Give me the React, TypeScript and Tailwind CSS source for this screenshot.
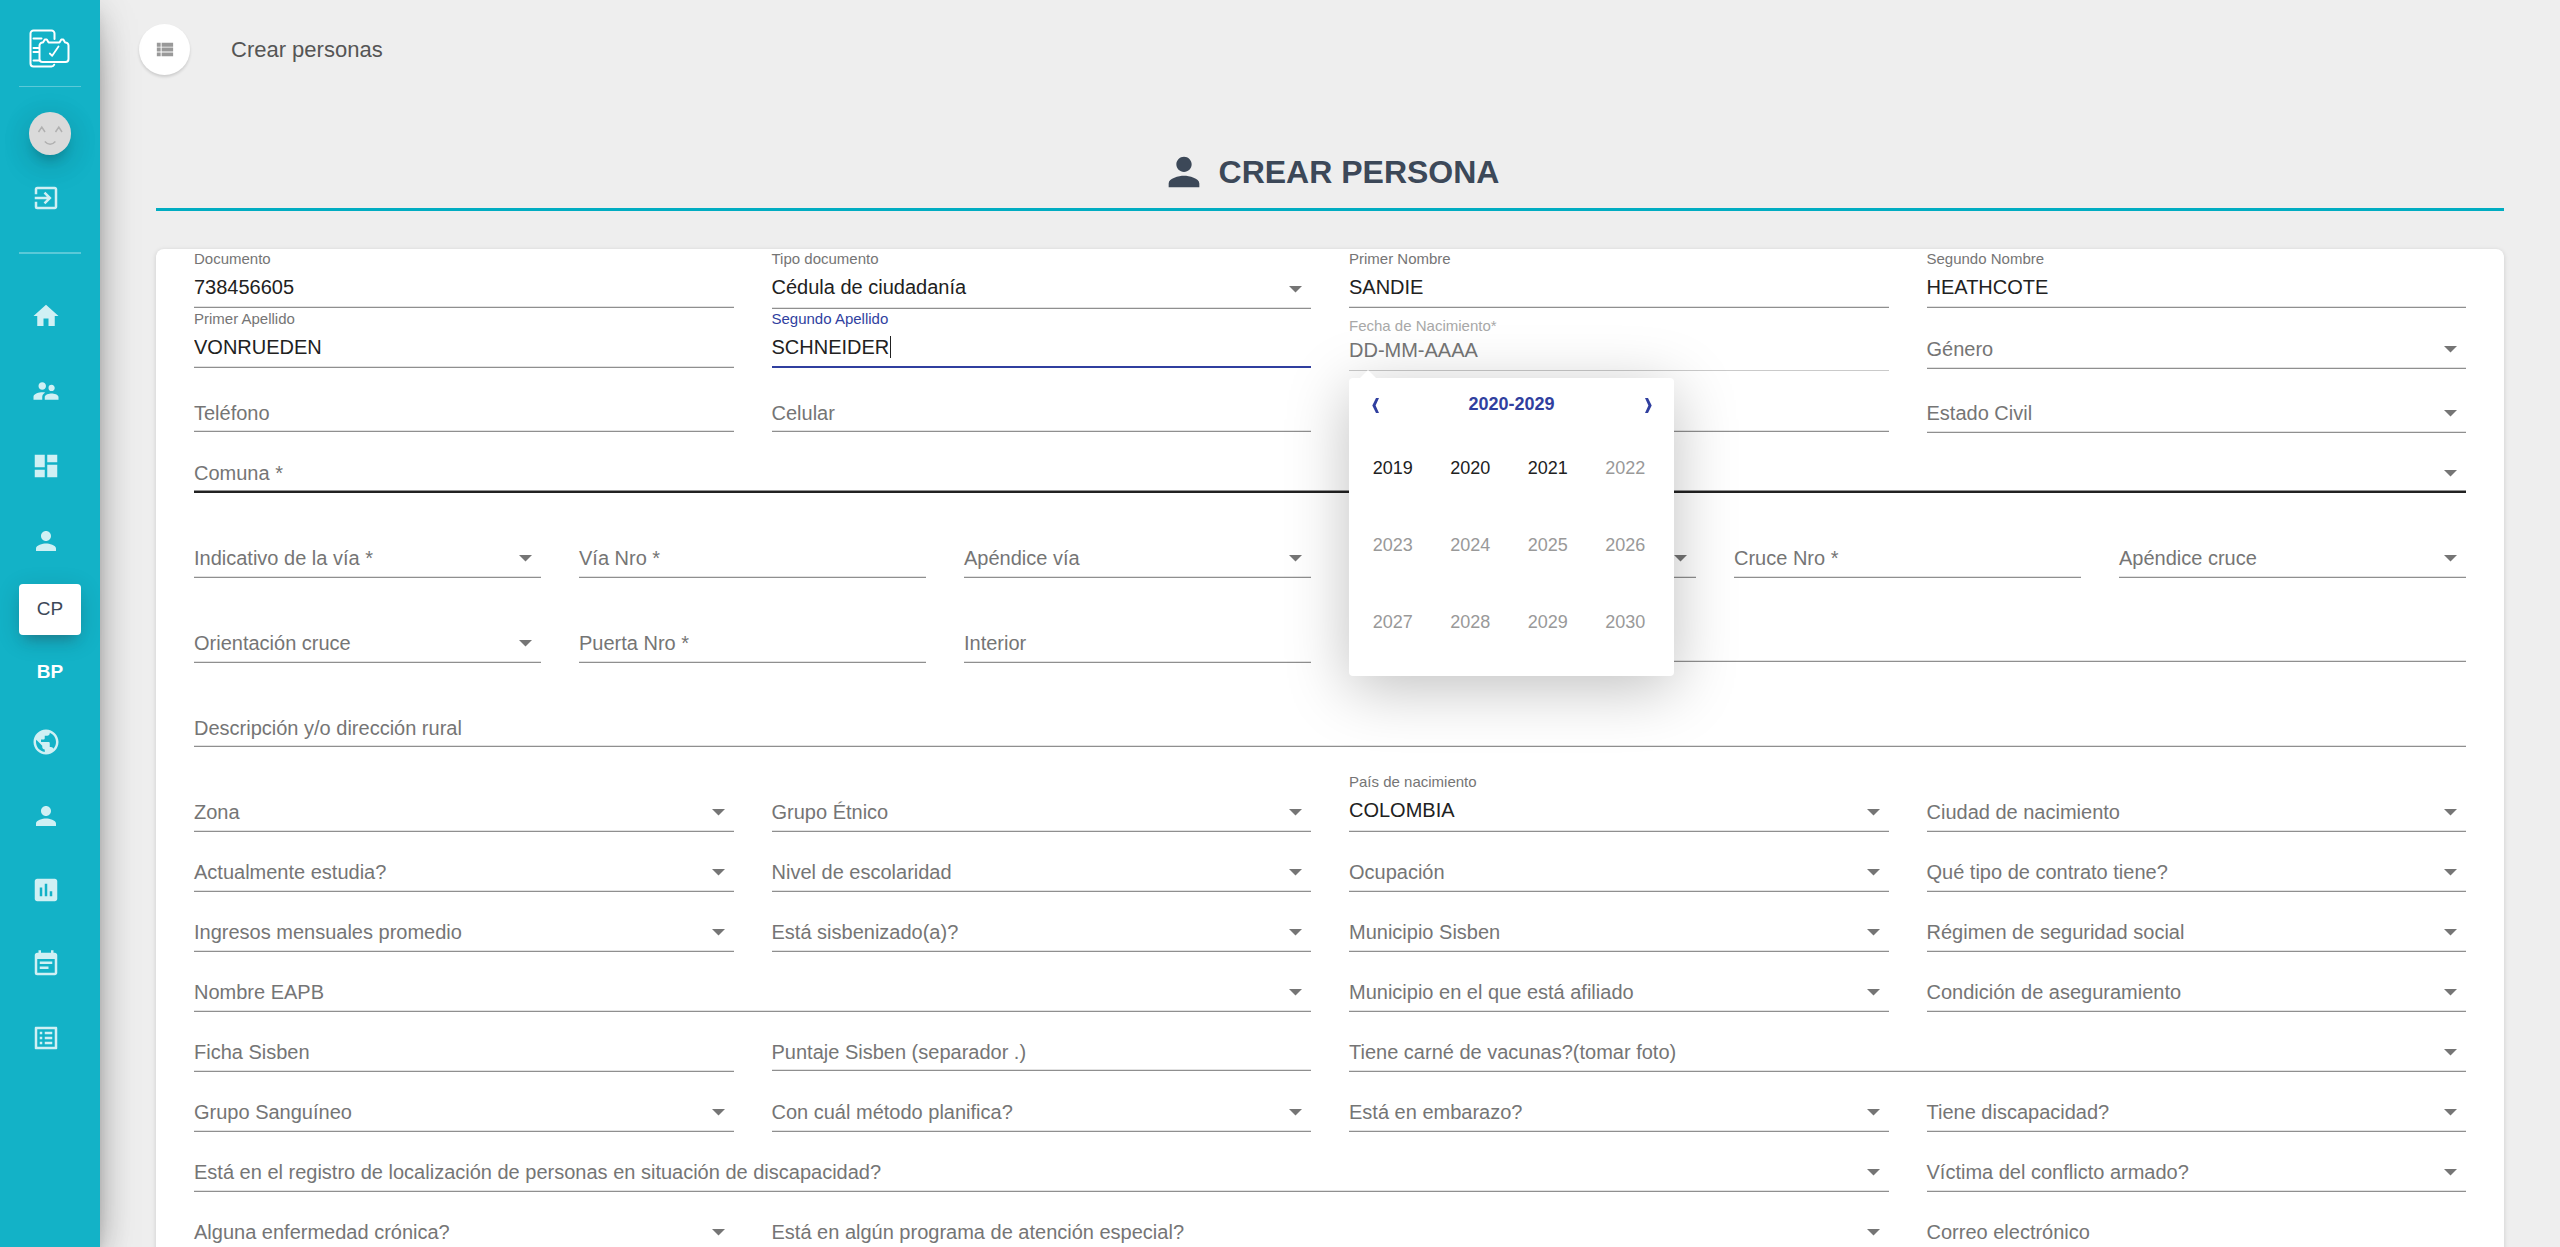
import React, { useId } from 'react';
import {
  MdDashboard,
  MdEventNote,
  MdExitToApp,
  MdHome,
  MdInsertChart,
  MdListAlt,
  MdPerson,
  MdPublic,
  MdSupervisorAccount,
} from 'react-icons/md';

type Tone = 'normal' | 'focused' | 'strong' | 'disabled';

type FieldProps = {
  label?: string;
  name?: string;
  value?: string;
  kind?: 'input' | 'select';
  tone?: Tone;
  tall?: boolean;
  span?: 2 | 3 | 6 | 9 | 12;
};

const spans = {
  2: 'col-span-2',
  3: 'col-span-3',
  6: 'col-span-6',
  9: 'col-span-9',
  12: 'col-span-12',
};

const lines: Record<Tone, string> = {
  normal: 'border-b border-[#8f8f8f] shadow-[inset_0_-1px_0_#e2e2e2]',
  focused: 'border-b-2 border-[#303f9f]',
  strong: 'border-b-2 border-[#212121] shadow-[inset_0_-1px_0_#949494]',
  disabled: 'border-b border-[#cacaca]',
};

function Field({ label, name, value, kind = 'input', tone = 'normal', tall = false, span = 3 }: FieldProps) {
  const id = useId();
  const isSelect = kind === 'select';
  const height = isSelect || tall ? 'h-[60px]' : 'h-[59px]';
  const control = 'h-9 w-full appearance-none bg-transparent text-xl text-[#212121] outline-none';

  return (
    <div className={`relative flex flex-col pt-5 ${height} ${spans[span]} ${lines[tone]}`}>
      {label && (
        <label
          htmlFor={id}
          className={
            value
              ? `absolute top-0 left-0 text-[15px] leading-5 ${tone === 'focused' ? 'text-[#303f9f]' : 'text-[#757575]'}`
              : 'pointer-events-none absolute top-[26px] left-0 text-xl leading-7 whitespace-nowrap text-[#757575]'
          }
        >
          {label}
        </label>
      )}
      {isSelect ? (
        <select id={id} aria-label={label ? undefined : name} defaultValue={value ?? ''} className={control}>
          <option value={value ?? ''}>{value ?? ''}</option>
        </select>
      ) : (
        <input id={id} type="text" aria-label={label ? undefined : name} defaultValue={value ?? ''} className={control} />
      )}
      {tone === 'focused' && <span className="absolute top-[27px] left-[118px] h-[22px] w-px bg-[#212121]" />}
      {isSelect && (
        <svg viewBox="0 0 13 7" className="pointer-events-none absolute top-[37px] right-[9px] h-[7px] w-[13px]" aria-hidden="true">
          <path d="M0 0h13L6.500 6.500z" fill="#757575" />
        </svg>
      )}
    </div>
  );
}

function Row({ children }: { children: React.ReactNode }) {
  return <div className="grid grid-cols-12 items-start gap-x-[38px]">{children}</div>;
}

const years = [2019, 2020, 2021, 2022, 2023, 2024, 2025, 2026, 2027, 2028, 2029, 2030];

function YearPicker() {
  return (
    <div className="absolute top-[69px] left-0 z-10 w-[325px] rounded bg-white pb-4 shadow-[0_12px_62px_rgba(0,0,0,0.25)]">
      <svg viewBox="0 0 16 8" className="absolute -top-2 left-[11px] h-2 w-4" aria-hidden="true">
        <path d="M0 8 8 0l8 8z" fill="#fff" />
      </svg>
      <div className="flex h-[51px] items-center justify-between px-[18px] text-lg font-bold text-[#303f9f]">
        <button type="button" aria-label="Década anterior" className="flex w-4 justify-center pt-1">
          <svg viewBox="0 0 7 15" className="h-[15px] w-[7px]" aria-hidden="true">
            <path d="M4 0H7L3.6 7.500 7 15H4L0.3 7.500z" fill="currentColor" />
          </svg>
        </button>
        <button type="button" className="leading-6">2020-2029</button>
        <button type="button" aria-label="Década siguiente" className="flex w-4 justify-center pt-1">
          <svg viewBox="0 0 7 15" className="h-[15px] w-[7px]" aria-hidden="true">
            <path d="M3 0H0l3.400 7.500L0 15h3l3.700-7.500z" fill="currentColor" />
          </svg>
        </button>
      </div>
      <div className="grid grid-cols-4 pr-[10px] pl-[5px]">
        {years.map((year) => (
          <button
            key={year}
            type="button"
            disabled={year > 2021}
            className="h-[77px] text-lg text-[#212121] disabled:text-[#999999]"
          >
            {year}
          </button>
        ))}
      </div>
    </div>
  );
}

function DateField() {
  const id = useId();
  return (
    <div className={`relative col-span-3 mb-[2px] flex h-[62px] flex-col pt-[7px] ${lines.disabled}`}>
      <label htmlFor={id} className="text-[15px] leading-5 text-[#a8a8a8]">
        Fecha de Nacimiento*
      </label>
      <input
        id={id}
        type="text"
        placeholder="DD-MM-AAAA"
        className="h-7 w-full bg-transparent text-xl outline-none placeholder:text-[#757575]"
      />
      <YearPicker />
    </div>
  );
}

function Logo() {
  return (
    <svg
      viewBox="0 0 44 42"
      className="h-[42px] w-11"
      fill="none"
      stroke="#fff"
      strokeWidth="2"
      strokeLinecap="round"
      strokeLinejoin="round"
      aria-hidden="true"
    >
      <path d="M26.500 11V5.500a3 3 0 0 0-3-3H5.500a3 3 0 0 0-3 3v30a3 3 0 0 0 3 3h18a3 3 0 0 0 2.700-1.800" />
      <path d="M5.500 10.500h8M5.500 20h5M5.500 24h5M5.500 32.500h5.500" />
      <path d="M15 14.500l1.800-3h2l1.800 3H31.500l1.800-3h2l1.800 3a3 3 0 0 1 3.400 3V31a3 3 0 0 1-3 3h-23a3 3 0 0 1-3-3V17.500a3 3 0 0 1 3.500-3z" />
      <path d="M21.800 25.500l2.400 2.300L30.500 18.500" strokeWidth="1.800" />
    </svg>
  );
}

function Face() {
  return (
    <svg viewBox="0 0 42 43" className="h-[43px] w-[42px]" fill="none" stroke="#b0b0b0" strokeWidth="1.500" aria-hidden="true">
      <path d="M9.500 20l3.300-4.800 3.200 4.800M26.500 20l3.300-4.800 3.200 4.800" />
      <path d="M15.800 29.500q5.300 5.500 10.600 0" />
    </svg>
  );
}

const topLinks = [
  { label: 'Inicio', Icon: MdHome },
  { label: 'Usuarios', Icon: MdSupervisorAccount },
  { label: 'Tablero', Icon: MdDashboard },
  { label: 'Personas', Icon: MdPerson },
];

const bottomLinks = [
  { label: 'Mapa', Icon: MdPublic },
  { label: 'Perfil', Icon: MdPerson },
  { label: 'Reportes', Icon: MdInsertChart },
  { label: 'Agenda', Icon: MdEventNote },
  { label: 'Listado', Icon: MdListAlt },
];

function NavIcons({ links }: { links: typeof topLinks }) {
  return (
    <>
      {links.map(({ label, Icon }) => (
        <a key={label} href="#" aria-label={label} className="flex h-[30px] items-center pl-[31px] text-white/80">
          <Icon className="size-[30px]" />
        </a>
      ))}
    </>
  );
}

function Sidebar() {
  return (
    <aside className="z-20 flex w-[100px] shrink-0 flex-col bg-[#13b2c7] shadow-[0_20px_48px_-15px_rgba(0,0,0,0.56),0_5px_31px_rgba(0,0,0,0.12),0_10px_12px_-6px_rgba(0,0,0,0.2)]">
      <a href="#" aria-label="Logo" className="mx-[19px] flex h-[87px] items-center justify-center border-b border-white/30 pt-3">
        <Logo />
      </a>
      <div className="mx-[19px] flex flex-col border-b-2 border-white/30 pt-[25px] pb-[39px]">
        <a
          href="#"
          aria-label="Usuario"
          className="self-center rounded-full bg-[#dadada] shadow-[0_12px_38px_-12px_rgba(0,0,0,0.42),0_5px_31px_rgba(0,0,0,0.12),0_10px_12px_-6px_rgba(0,0,0,0.2)]"
        >
          <Face />
        </a>
        <a href="#" aria-label="Salir" className="mt-[28px] ml-3 text-white/80">
          <MdExitToApp className="size-[30px]" />
        </a>
      </div>
      <nav className="flex flex-col pt-[47px]">
        <div className="flex flex-col gap-[45px]">
          <NavIcons links={topLinks} />
        </div>
        <a
          href="#"
          className="mx-[19px] mt-[28px] flex h-[51px] items-center justify-center rounded bg-white text-[19px] text-[#3c4858] shadow-[0_5px_25px_rgba(0,0,0,0.14),0_9px_12px_-6px_rgba(60,72,88,0.4)]"
        >
          CP
        </a>
        <a href="#" className="mx-[19px] mt-3 flex h-[51px] items-center justify-center text-[19px] font-bold text-white">
          BP
        </a>
        <div className="flex flex-col gap-11 pt-[29px]">
          <NavIcons links={bottomLinks} />
        </div>
      </nav>
    </aside>
  );
}

export default function App() {
  return (
    <div className="flex h-screen overflow-hidden bg-[#eeeeee] font-['Liberation_Sans',Arial,sans-serif] text-[#3c4858]">
      <Sidebar />
      <main className="min-w-0 flex-1 overflow-y-auto [scrollbar-width:none]">
        <header className="flex h-[99px] items-center gap-[41px] pl-[39px]">
          <button
            type="button"
            aria-label="Alternar menú"
            className="flex size-[51px] items-center justify-center rounded-full bg-white shadow-[0_2px_3px_rgba(0,0,0,0.14)]"
          >
            <svg viewBox="0 0 24 24" className="size-[23px]" fill="#999" aria-hidden="true">
              <path d="M4 14h4v-4H4v4zm0 5h4v-4H4v4zM4 9h4V5H4v4zm5 5h12v-4H9v4zm0 5h12v-4H9v4zM9 5v4h12V5H9z" />
            </svg>
          </button>
          <a href="#" className="text-[22px] text-[#555555]">
            Crear personas
          </a>
        </header>

        <div className="px-14 pt-[50px]">
          <h1 className="flex h-[62px] items-start justify-center gap-3 border-b-3 border-[#00acc1] text-[32px] leading-[46px] font-bold">
            <MdPerson className="size-[46px]" />
            CREAR PERSONA
          </h1>

          <form className="mt-[38px] rounded-lg bg-white px-[38px] pb-10 shadow-[0_1px_5px_rgba(0,0,0,0.14)]">
            <Row>
              <Field label="Documento" value="738456605" />
              <Field label="Tipo documento" value="Cédula de ciudadanía" kind="select" />
              <Field label="Primer Nombre" value="SANDIE" />
              <Field label="Segundo Nombre" value="HEATHCOTE" />
            </Row>
            <Row>
              <Field label="Primer Apellido" value="VONRUEDEN" />
              <Field label="Segundo Apellido" value="SCHNEIDER" tone="focused" />
              <DateField />
              <Field label="Género" kind="select" />
            </Row>
            <Row>
              <Field label="Teléfono" />
              <Field label="Celular" />
              <Field name="Teléfono alterno" />
              <Field label="Estado Civil" kind="select" />
            </Row>
            <div className="flex flex-col gap-[25px] pb-[25px]">
              <Row>
                <Field label="Comuna *" kind="select" tone="strong" span={12} />
              </Row>
              <Row>
                <Field label="Indicativo de la vía *" kind="select" span={2} />
                <Field label="Vía Nro *" tall span={2} />
                <Field label="Apéndice vía" kind="select" span={2} />
                <Field name="Orientación vía" kind="select" span={2} />
                <Field label="Cruce Nro *" tall span={2} />
                <Field label="Apéndice cruce" kind="select" span={2} />
              </Row>
              <Row>
                <Field label="Orientación cruce" kind="select" span={2} />
                <Field label="Puerta Nro *" tall span={2} />
                <Field label="Interior" tall span={2} />
                <Field name="Dirección" span={6} />
              </Row>
              <Row>
                <Field label="Descripción y/o dirección rural" span={12} />
              </Row>
            </div>
            <Row>
              <Field label="Zona" kind="select" />
              <Field label="Grupo Étnico" kind="select" />
              <Field label="País de nacimiento" value="COLOMBIA" kind="select" />
              <Field label="Ciudad de nacimiento" kind="select" />
            </Row>
            <Row>
              <Field label="Actualmente estudia?" kind="select" />
              <Field label="Nivel de escolaridad" kind="select" />
              <Field label="Ocupación" kind="select" />
              <Field label="Qué tipo de contrato tiene?" kind="select" />
            </Row>
            <Row>
              <Field label="Ingresos mensuales promedio" kind="select" />
              <Field label="Está sisbenizado(a)?" kind="select" />
              <Field label="Municipio Sisben" kind="select" />
              <Field label="Régimen de seguridad social" kind="select" />
            </Row>
            <Row>
              <Field label="Nombre EAPB" kind="select" span={6} />
              <Field label="Municipio en el que está afiliado" kind="select" />
              <Field label="Condición de aseguramiento" kind="select" />
            </Row>
            <Row>
              <Field label="Ficha Sisben" tall />
              <Field label="Puntaje Sisben (separador .)" />
              <Field label="Tiene carné de vacunas?(tomar foto)" kind="select" span={6} />
            </Row>
            <Row>
              <Field label="Grupo Sanguíneo" kind="select" />
              <Field label="Con cuál método planifica?" kind="select" />
              <Field label="Está en embarazo?" kind="select" />
              <Field label="Tiene discapacidad?" kind="select" />
            </Row>
            <Row>
              <Field
                label="Está en el registro de localización de personas en situación de discapacidad?"
                kind="select"
                span={9}
              />
              <Field label="Víctima del conflicto armado?" kind="select" />
            </Row>
            <Row>
              <Field label="Alguna enfermedad crónica?" kind="select" />
              <Field label="Está en algún programa de atención especial?" kind="select" span={6} />
              <Field label="Correo electrónico" />
            </Row>
          </form>
        </div>
      </main>
    </div>
  );
}
